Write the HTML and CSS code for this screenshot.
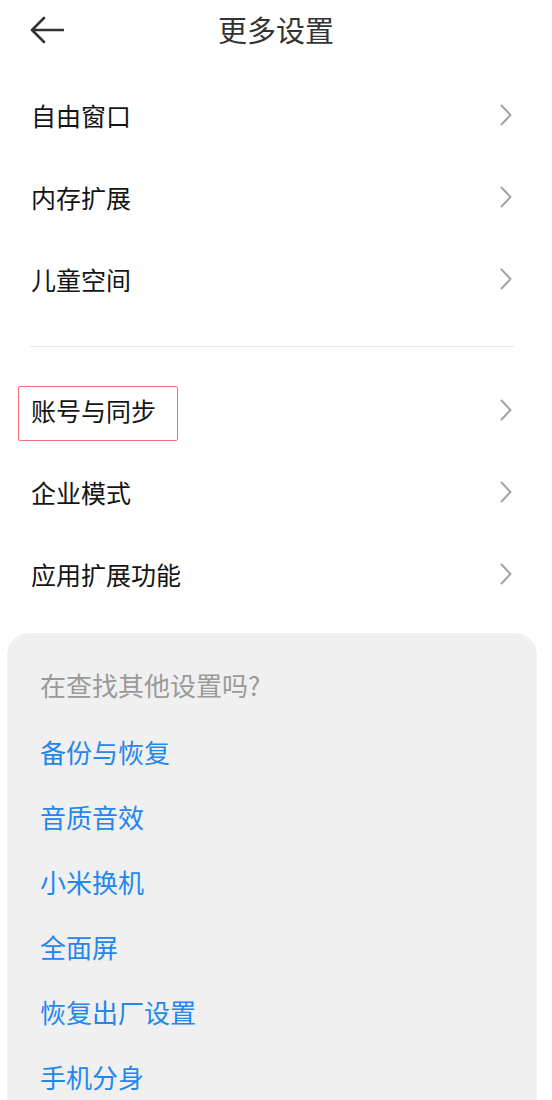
FILE: index.html
```html
<!DOCTYPE html>
<html lang="zh-CN">
<head>
<meta charset="utf-8">
<title>更多设置</title>
<link rel="stylesheet" href="styles.css">
</head>
<body>
<div class="page">
  <header class="header">
    <svg class="back" width="34" height="28" viewBox="0 0 34 28"><path d="M33 14H3M14 2L2 14l12 12" fill="none" stroke="#333" stroke-width="2.6" stroke-linecap="round" stroke-linejoin="round"/></svg>
    <h1 class="title">更多设置</h1>
  </header>
  <ul class="list first">
    <li class="row"><span class="label">自由窗口</span><svg class="chev" width="12" height="22" viewBox="0 0 12 22"><path d="M1.5 1.5L10.5 11 1.5 20.5" fill="none" stroke="#a3a3a3" stroke-width="2" stroke-linecap="round" stroke-linejoin="round"/></svg></li>
    <li class="row"><span class="label">内存扩展</span><svg class="chev" width="12" height="22" viewBox="0 0 12 22"><path d="M1.5 1.5L10.5 11 1.5 20.5" fill="none" stroke="#a3a3a3" stroke-width="2" stroke-linecap="round" stroke-linejoin="round"/></svg></li>
    <li class="row"><span class="label">儿童空间</span><svg class="chev" width="12" height="22" viewBox="0 0 12 22"><path d="M1.5 1.5L10.5 11 1.5 20.5" fill="none" stroke="#a3a3a3" stroke-width="2" stroke-linecap="round" stroke-linejoin="round"/></svg></li>
  </ul>
  <div class="divider"></div>
  <ul class="list second">
    <li class="row"><span class="label marked">账号与同步</span><svg class="chev" width="12" height="22" viewBox="0 0 12 22"><path d="M1.5 1.5L10.5 11 1.5 20.5" fill="none" stroke="#a3a3a3" stroke-width="2" stroke-linecap="round" stroke-linejoin="round"/></svg></li>
    <li class="row"><span class="label">企业模式</span><svg class="chev" width="12" height="22" viewBox="0 0 12 22"><path d="M1.5 1.5L10.5 11 1.5 20.5" fill="none" stroke="#a3a3a3" stroke-width="2" stroke-linecap="round" stroke-linejoin="round"/></svg></li>
    <li class="row"><span class="label">应用扩展功能</span><svg class="chev" width="12" height="22" viewBox="0 0 12 22"><path d="M1.5 1.5L10.5 11 1.5 20.5" fill="none" stroke="#a3a3a3" stroke-width="2" stroke-linecap="round" stroke-linejoin="round"/></svg></li>
  </ul>
  <section class="panel">
    <p class="panel-title">在查找其他设置吗?</p>
    <ul class="links">
      <li class="link">备份与恢复</li>
      <li class="link">音质音效</li>
      <li class="link">小米换机</li>
      <li class="link">全面屏</li>
      <li class="link">恢复出厂设置</li>
      <li class="link">手机分身</li>
    </ul>
  </section>
</div>
</body>
</html>
```
FILE: styles.css
```css
* { box-sizing: border-box; }
html, body {
  margin: 0;
  padding: 0;
  background: #fff;
  font-family: "Noto Sans CJK SC", "Noto Sans", sans-serif;
}
.page {
  width: 552px;
  height: 1100px;
  overflow: hidden;
}
.header {
  height: 58px;
  display: flex;
  align-items: center;
  justify-content: center;
  position: relative;
}
.back {
  position: absolute;
  left: 30px;
  top: 16px;
}
.title {
  margin: 0;
  font-size: 29px;
  font-weight: normal;
  color: #333;
  line-height: 58px;
  letter-spacing: 0;
}
.list {
  list-style: none;
  margin: 0;
  padding: 0;
}
.list.first { padding-top: 16px; }
.row {
  height: 82px;
  display: flex;
  align-items: center;
  justify-content: space-between;
  padding: 0 40px 0 31px;
}
.label {
  font-size: 25px;
  color: #141414;
  line-height: 1;
}
.marked { position: relative; }
.marked::after {
  content: "";
  position: absolute;
  left: -13px;
  right: -22px;
  top: -12px;
  bottom: -18px;
  border: 1.5px solid #f26d6d;
  border-radius: 2px;
}
.chev { display: block; }
.divider {
  height: 1px;
  background: #e8e8e8;
  margin: 26px 38px 22px 30px;
}
.panel {
  margin: 18px 15px 0 7px;
  background: #f0f0f0;
  border-radius: 22px;
  padding: 37px 32px 40px 33px;
  height: 600px;
}
.panel-title {
  margin: 0;
  font-size: 26px;
  color: #9a9a9a;
  line-height: 30px;
}
.links {
  list-style: none;
  margin: 0;
  padding: 0;
}
.link {
  font-size: 26px;
  color: #2387ee;
  height: 65px;
  line-height: 65px;
}
.link:first-child { margin-top: 19px; }
```
